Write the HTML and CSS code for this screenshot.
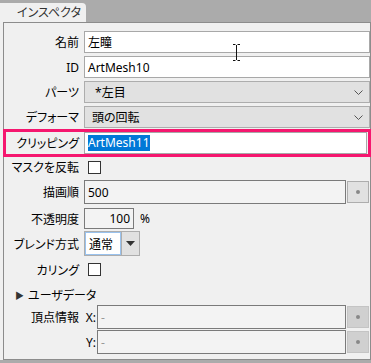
FILE: index.html
```html
<!DOCTYPE html>
<html lang="ja">
<head>
    <meta charset="UTF-8">
    <title>インスペクタ</title>
    <link rel="stylesheet" href="styles.css">
</head>
<body>
    <div class="window">
        <div class="tabbar">
            <div class="tab">インスペクタ</div>
        </div>
        <div class="frame">
            <div class="panel">
                <div class="row r-name">
                    <div class="label">名前</div>
                    <div class="field text">左瞳</div>
                </div>
                <div class="row r-id">
                    <div class="label">ID</div>
                    <div class="field text">ArtMesh10</div>
                </div>
                <div class="row r-parts">
                    <div class="label">パーツ</div>
                    <div class="field select">
                        <span class="value">&nbsp;*左目</span>
                        <svg class="chevron" width="9" height="5" viewBox="0 0 9 5"><polyline points="0.5,0.5 4.5,4.5 8.5,0.5" fill="none" stroke="#555" stroke-width="1"/></svg>
                    </div>
                </div>
                <div class="row r-deform">
                    <div class="label">デフォーマ</div>
                    <div class="field select">
                        <span class="value">頭の回転</span>
                        <svg class="chevron" width="9" height="5" viewBox="0 0 9 5"><polyline points="0.5,0.5 4.5,4.5 8.5,0.5" fill="none" stroke="#555" stroke-width="1"/></svg>
                    </div>
                </div>
                <div class="row r-clip">
                    <div class="label">クリッピング</div>
                    <div class="field text"><span class="selected">ArtMesh11</span></div>
                </div>
                <div class="row r-mask">
                    <div class="label">マスクを反転</div>
                    <div class="checkbox"></div>
                </div>
                <div class="row r-order">
                    <div class="label">描画順</div>
                    <div class="field num">500</div>
                    <div class="dot-btn"><span class="dot"></span></div>
                </div>
                <div class="row r-opacity">
                    <div class="label">不透明度</div>
                    <div class="field num short">100</div>
                    <div class="unit">%</div>
                </div>
                <div class="row r-blend">
                    <div class="label">ブレンド方式</div>
                    <div class="combo">
                        <div class="combo-value">通常</div>
                        <div class="combo-btn">
                            <svg width="9" height="5" viewBox="0 0 9 5"><polygon points="0,0 9,0 4.5,5" fill="#333"/></svg>
                        </div>
                    </div>
                </div>
                <div class="row r-cull">
                    <div class="label">カリング</div>
                    <div class="checkbox"></div>
                </div>
                <div class="row r-user">
                    <span class="tri">&#9654;</span>
                    <span>ユーザデータ</span>
                </div>
                <div class="row r-x">
                    <div class="label">頂点情報</div>
                    <div class="axis">X:</div>
                    <div class="field num dim">-</div>
                    <div class="dot-btn off"><span class="dot"></span></div>
                </div>
                <div class="row r-y">
                    <div class="label"></div>
                    <div class="axis">Y:</div>
                    <div class="field num dim">-</div>
                    <div class="dot-btn off"><span class="dot"></span></div>
                </div>
            </div>
        </div>
        <!-- mouse cursor over the name field -->
        <svg class="ibeam" width="9" height="17" viewBox="0 0 9 17">
            <path d="M1 0.5H3.5M5.5 0.5H8M4.5 1V16M1 16.5H3.5M5.5 16.5H8" fill="none" stroke="#111" stroke-width="1"/>
        </svg>
    </div>
</body>
</html>
```

FILE: styles.css
```css
body {
    margin: 0;
    background-color: #ababab;
    font-family: "Noto Sans", "Noto Sans CJK JP", sans-serif;
    font-size: 12px;
    font-feature-settings: "palt";
    color: #000;
}
.window {
    position: relative;
    width: 371px;
    height: 363px;
    background-color: #ababab;
    overflow: hidden;
}
.tabbar {
    height: 22px;
    display: flex;
    align-items: flex-end;
}
.tab {
    width: 86px;
    height: 19px;
    box-sizing: border-box;
    background-color: #f0f0f0;
    border-radius: 0 4px 0 0;
    padding-left: 17px;
    line-height: 19px;
    color: #333;
}
.frame {
    height: 338px;
    padding-left: 3px;
    background-color: #f0f0f0;
}
.panel {
    height: 338px;
    box-sizing: border-box;
    border: 1px solid #8c8c8c;
    padding-top: 8px;
}
.row {
    display: flex;
    align-items: center;
}
.label {
    width: 76px;
    margin-right: 4px;
    text-align: right;
    padding-right: 1px;
    box-sizing: border-box;
    white-space: nowrap;
}
.field {
    flex: 1;
    height: 100%;
    box-sizing: border-box;
    display: flex;
    align-items: center;
    white-space: nowrap;
}
.text {
    background-color: #fff;
    border: 1px solid #a8a8a8;
    padding-left: 3px;
}
.select {
    background-color: #e1e1e1;
    border: 1px solid #adadad;
    padding-left: 7px;
    padding-right: 6px;
}
.select .value {
    flex: 1;
}
.num {
    background-color: #f3f3f3;
    border: 1px solid #7a7a7a;
    padding-left: 3px;
}
.num.short {
    flex: none;
    width: 50px;
    justify-content: flex-end;
    padding-right: 3px;
}
.num.dim {
    color: #999;
}
.unit {
    margin-left: 6px;
}
.r-name { height: 22px; }
.r-id { height: 22px; margin-top: 3px; }
.r-parts { height: 22px; margin-top: 3px; }
.r-deform { height: 22px; margin-top: 3px; }
.r-clip {
    height: 28px;
    margin: 1px -1px 0;
    box-sizing: border-box;
    border: 3px solid #f5176f;
    padding: 0 1px 0 0;
}
.r-clip .label {
    width: 74px;
}
.selected {
    background-color: #0078d7;
    color: #fff;
    line-height: 16px;
}
.r-mask { height: 18px; margin-top: 1px; }
.r-order { height: 24px; margin-top: 4px; }
.r-opacity { height: 21px; margin-top: 4px; }
.r-blend { height: 25px; margin-top: 2px; }
.r-cull { height: 19px; margin-top: 4px; }
.r-user { height: 14px; margin-top: 9px; padding-left: 11px; }
.r-x { height: 24px; margin-top: 3px; }
.r-y { height: 24px; margin-top: 1px; }
.checkbox {
    width: 13px;
    height: 13px;
    box-sizing: border-box;
    margin-left: 4px;
    border: 1px solid #333;
    background-color: #fff;
}
.dot-btn {
    width: 22px;
    height: 22px;
    box-sizing: border-box;
    margin-left: 1px;
    margin-right: 1px;
    background-color: #e1e1e1;
    border: 1px solid #adadad;
    display: flex;
    align-items: center;
    justify-content: center;
}
.dot-btn.off {
    background-color: #d0d0d0;
    border-color: #c4c4c4;
}
.dot {
    width: 4px;
    height: 4px;
    border-radius: 50%;
    background-color: #888;
}
.combo {
    display: flex;
    height: 100%;
    box-sizing: border-box;
    border: 1px solid #adadad;
}
.combo-value {
    width: 36px;
    box-sizing: border-box;
    background-color: #fff;
    border: 1px solid #99c2ee;
    padding-left: 3px;
    display: flex;
    align-items: center;
}
.combo-btn {
    width: 17px;
    background-color: #e1e1e1;
    border-left: 1px solid #adadad;
    display: flex;
    align-items: center;
    justify-content: center;
}
.tri {
    font-size: 9px;
    color: #333;
    margin-right: 4px;
}
.axis {
    width: 13px;
    margin-left: -1px;
    text-align: right;
    margin-right: 1px;
}
.ibeam {
    position: absolute;
    left: 232px;
    top: 44px;
}
```
